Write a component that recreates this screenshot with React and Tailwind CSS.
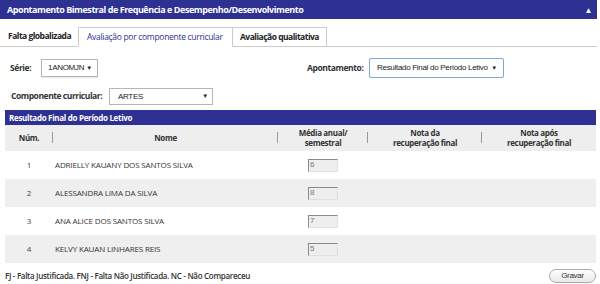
const alunos = [
  { num: 1, nome: 'ADRIELLY KAUANY DOS SANTOS SILVA', media: '6' },
  { num: 2, nome: 'ALESSANDRA LIMA DA SILVA', media: '8' },
  { num: 3, nome: 'ANA ALICE DOS SANTOS SILVA', media: '7' },
  { num: 4, nome: 'KELVY KAUAN LINHARES REIS', media: '5' },
];

function Select({ value, className }) {
  return (
    <div className={`flex items-center justify-between whitespace-nowrap bg-white font-['Liberation_Sans',Arial,sans-serif] text-[8px] font-normal text-[#222] tracking-[-0.3px] ${className}`}>
      <span>{value}</span>
      <span className="text-[6px]">▼</span>
    </div>
  );
}

function HeaderCell({ children, w, sep = true }) {
  return (
    <div className={`relative flex items-center justify-center text-center leading-[10px] ${w}`}>
      {children}
      {sep && <span className="absolute right-0 top-[7px] h-[11px] w-px bg-[#999]" />}
    </div>
  );
}

export default function App() {
  return (
    <div className="w-[600px] h-[284px] overflow-hidden bg-white font-['Open_Sans',sans-serif] text-[#333]">
      <div className="w-[597px]">
        <div className="flex h-[19px] items-center justify-between bg-[#2e3192] pl-[7px] pr-[5px] text-[9px] font-bold tracking-[-0.45px] text-white">
          <span>Apontamento Bimestral de Frequência e Desempenho/Desenvolvimento</span>
          <span className="text-[8px]">▲</span>
        </div>

        <div className="mt-[8px] flex h-[20px] items-stretch border-b border-[#ccc] text-[8.5px] tracking-[-0.5px]">
          <div className="flex w-[78px] items-center pl-[8px] font-bold text-[#222]">Falta globalizada</div>
          <div className="-mb-px flex w-[155px] items-center border border-b-white border-[#ccc] bg-white pl-[8px] tracking-[-0.3px] text-[#2e3192]">
            Avaliação por componente curricular
          </div>
          <div className="flex w-[94px] items-center border-t border-r border-[#ccc] pl-[7px] font-bold text-[#222]">
            Avaliação qualitativa
          </div>
        </div>

        <div className="mt-[11px] flex h-[20px] items-center text-[8.5px] font-bold tracking-[-0.4px]">
          <div className="flex w-[307px] items-center pl-[10px]">
            <span className="w-[31px]">Série:</span>
            <Select value="1ANOMJN" className="h-[18px] w-[57px] border border-[#b5b5b5] pl-[6px] pr-[5px] shadow-[0_1px_1px_rgba(0,0,0,0.08)]" />
          </div>
          <span className="w-[62px]">Apontamento:</span>
          <Select value="Resultado Final do Período Letivo" className="h-[20px] w-[135px] rounded-[2px] border border-[#7ea6d8] pl-[7px] pr-[6px]" />
        </div>

        <div className="mt-[10px] flex h-[17px] items-center pl-[11px] text-[8.5px] font-bold tracking-[-0.45px]">
          <span className="w-[98px]">Componente curricular:</span>
          <Select value="ARTES" className="h-[17px] w-[104px] border border-[#b5b5b5] pl-[8px] pr-[4px]" />
        </div>

        <div className="ml-[5px] mt-[5px] w-[591px]">
          <div className="flex h-[15px] items-center bg-[#2e3192] pl-[4px] text-[8px] font-bold tracking-[-0.3px] text-white">
            Resultado Final do Período Letivo
          </div>
          <div className="flex h-[26px] bg-[#eeeeee] text-[8px] font-bold tracking-[-0.35px] text-[#333]">
            <HeaderCell w="w-[48px]">Núm.</HeaderCell>
            <HeaderCell w="w-[225px]">Nome</HeaderCell>
            <HeaderCell w="w-[90px]">
              Média anual/
              <br />
              semestral
            </HeaderCell>
            <HeaderCell w="w-[114px]">
              Nota da
              <br />
              recuperação final
            </HeaderCell>
            <HeaderCell w="w-[114px]" sep={false}>
              Nota após
              <br />
              recuperação final
            </HeaderCell>
          </div>
          {alunos.map((a, i) => (
            <div
              key={a.num}
              className={`flex h-[28px] items-center text-[8px] tracking-[-0.15px] text-[#333] ${i % 2 ? 'bg-[#efefef]' : 'bg-white'}`}
            >
              <span className="w-[48px] shrink-0 text-center text-[#444]">{a.num}</span>
              <span className="w-[225px] shrink-0 pl-[2px] text-left">{a.nome}</span>
              <div className="flex w-[90px] shrink-0 justify-center">
                <div className="flex h-[13px] w-[30px] items-center border border-t-[#8a8a8a] border-l-[#8a8a8a] border-b-[#e0e0e0] border-r-[#e0e0e0] bg-[#eeeeee] pl-[1px] font-['Liberation_Sans',Arial,sans-serif] text-[8px] text-[#777]">
                  {a.media}
                </div>
              </div>
            </div>
          ))}
        </div>

        <div className="mt-[4px] flex h-[18px] items-center justify-between pl-[5px] pr-[1px]">
          <span className="text-[8px] font-semibold tracking-[-0.3px] text-[#333]">
            FJ - Falta Justificada. FNJ - Falta Não Justificada. NC - Não Compareceu
          </span>
          <button className="flex h-[14px] w-[47px] items-center justify-center rounded-full border border-[#aaa] bg-gradient-to-b from-white to-[#e8e8e8] font-['Liberation_Sans',Arial,sans-serif] text-[8px] tracking-[-0.3px] text-[#333]">
            Gravar
          </button>
        </div>
      </div>
    </div>
  );
}
